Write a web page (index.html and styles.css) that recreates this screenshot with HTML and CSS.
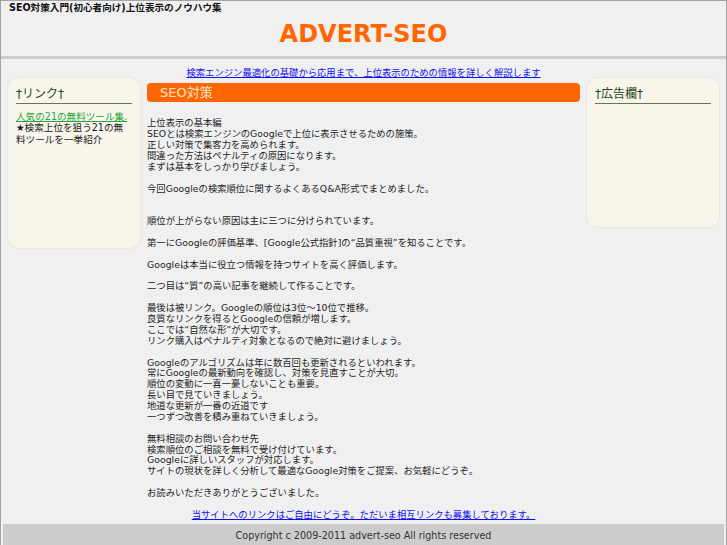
FILE: index.html
```html
<!DOCTYPE html>
<html lang="ja">
<head>
<meta charset="utf-8">
<title>ADVERT-SEO</title>
<link rel="stylesheet" href="styles.css">
</head>
<body>
<div class="page">
  <header class="site-header">
    <h1 class="tagline">SEO対策入門(初心者向け)上位表示のノウハウ集</h1>
    <p class="logo">ADVERT-SEO</p>
  </header>
  <div class="main">
    <aside class="side side-left">
      <h2 class="side-title">†リンク†</h2>
      <a class="side-link" href="#">人気の21の無料ツール集.</a>
      <p class="side-text">★検索上位を狙う21の無料ツールを一挙紹介</p>
    </aside>
    <div class="content">
      <p class="center-link top"><a href="#">検索エンジン最適化の基礎から応用まで、上位表示のための情報を詳しく解説します</a></p>
      <h2 class="content-title">SEO対策</h2>
      <div class="article">
        <p>上位表示の基本編<br>SEOとは検索エンジンのGoogleで上位に表示させるための施策。<br>正しい対策で集客力を高められます。<br>間違った方法はペナルティの原因になります。<br>まずは基本をしっかり学びましょう。</p>
        <p>今回Googleの検索順位に関するよくあるQ&amp;A形式でまとめました。</p>
        <p class="gap">順位が上がらない原因は主に三つに分けられています。</p>
        <p>第一にGoogleの評価基準、[Google公式指針]の“品質重視”を知ることです。</p>
        <p>Googleは本当に役立つ情報を持つサイトを高く評価します。</p>
        <p>二つ目は“質”の高い記事を継続して作ることです。</p>
        <p>最後は被リンク。Googleの順位は3位〜10位で推移。<br>良質なリンクを得るとGoogleの信頼が増します。<br>ここでは“自然な形”が大切です。<br>リンク購入はペナルティ対象となるので絶対に避けましょう。</p>
        <p>Googleのアルゴリズムは年に数百回も更新されるといわれます。<br>常にGoogleの最新動向を確認し、対策を見直すことが大切。<br>順位の変動に一喜一憂しないことも重要。<br>長い目で見ていきましょう。<br>地道な更新が一番の近道です<br>一つずつ改善を積み重ねていきましょう。</p>
        <p>無料相談のお問い合わせ先<br>検索順位のご相談を無料で受け付けています。<br>Googleに詳しいスタッフが対応します。<br>サイトの現状を詳しく分析して最適なGoogle対策をご提案、お気軽にどうぞ。</p>
        <p>お読みいただきありがとうございました。</p>
      </div>
      <p class="center-link"><a href="#">当サイトへのリンクはご自由にどうぞ。ただいま相互リンクも募集しております。</a></p>
    </div>
    <aside class="side side-right">
      <h2 class="side-title">†広告欄†</h2>
    </aside>
  </div>
  <footer class="footer">Copyright c 2009-2011 advert-seo All rights reserved</footer>
</div>
</body>
</html>
```
FILE: styles.css
```css
* { box-sizing: border-box; }

html, body {
  margin: 0;
  padding: 0;
  background: #f0f0f0;
}

body {
  font-family: "DejaVu Sans", "Noto Sans CJK JP", sans-serif;
  color: #222;
}

.page {
  min-height: 545px;
  border: 1px solid #a3a3a3;
  border-bottom: none;
  background: #f0f0f0;
}

.site-header {
  padding: 1px 8px 8px;
  border-bottom: 3px solid #cdcdcd;
}

.tagline {
  margin: 0;
  font-size: 9.6px;
  line-height: 12px;
  font-weight: bold;
  color: #111;
}

.logo {
  margin: 6px 0 0;
  text-align: center;
  font-size: 24px;
  line-height: 28px;
  font-weight: bold;
  color: #ff6600;
}

.main {
  display: flex;
  align-items: flex-start;
  gap: 7px;
  padding: 8px 7px 0;
}

.side {
  flex: 0 0 132px;
  width: 132px;
  margin-top: 11px;
  padding: 8px;
  background: #f8f5ea;
  border-radius: 10px;
  box-shadow: 0 0 2px rgba(0, 0, 0, 0.12);
}

.side-left { height: 170px; }
.side-right { height: 149px; }

.side-title {
  margin: 0;
  padding-bottom: 1px;
  font-size: 12px;
  line-height: 16px;
  font-weight: normal;
  color: #1f4a1f;
  border-bottom: 1px solid #5f7a5a;
}

.side-link {
  display: block;
  margin-top: 6.5px;
  font-size: 9.6px;
  line-height: 11.5px;
  color: #22a63c;
}

.side-text {
  margin: 0;
  font-size: 9.6px;
  line-height: 11.5px;
  color: #1a1a1a;
}

.content {
  flex: 1 1 auto;
  min-width: 0;
  padding-bottom: 3.4px;
}

.center-link {
  margin: 0;
  text-align: center;
  font-size: 9.33px;
  line-height: 10.87px;
}

.center-link.top {
  padding-top: 1px;
}

.center-link a {
  color: #1010ee;
}

.content-title {
  margin: 4px 0 0;
  height: 19px;
  padding-left: 13px;
  background: #ff6600;
  border-radius: 4px;
  color: #ffe6cf;
  font-size: 13px;
  line-height: 19px;
  font-weight: normal;
}

.article {
  margin-top: 16.5px;
  font-size: 9.33px;
  line-height: 10.87px;
  color: #1e1e1e;
}

.article p {
  margin: 0 0 10.87px;
}

.article p.gap {
  margin-top: 21.74px;
}

.footer {
  margin: 0 2px;
  padding: 6px 0 4px;
  background: #cccccc;
  text-align: center;
  font-size: 9.6px;
  line-height: 12px;
  color: #333;
}
```
